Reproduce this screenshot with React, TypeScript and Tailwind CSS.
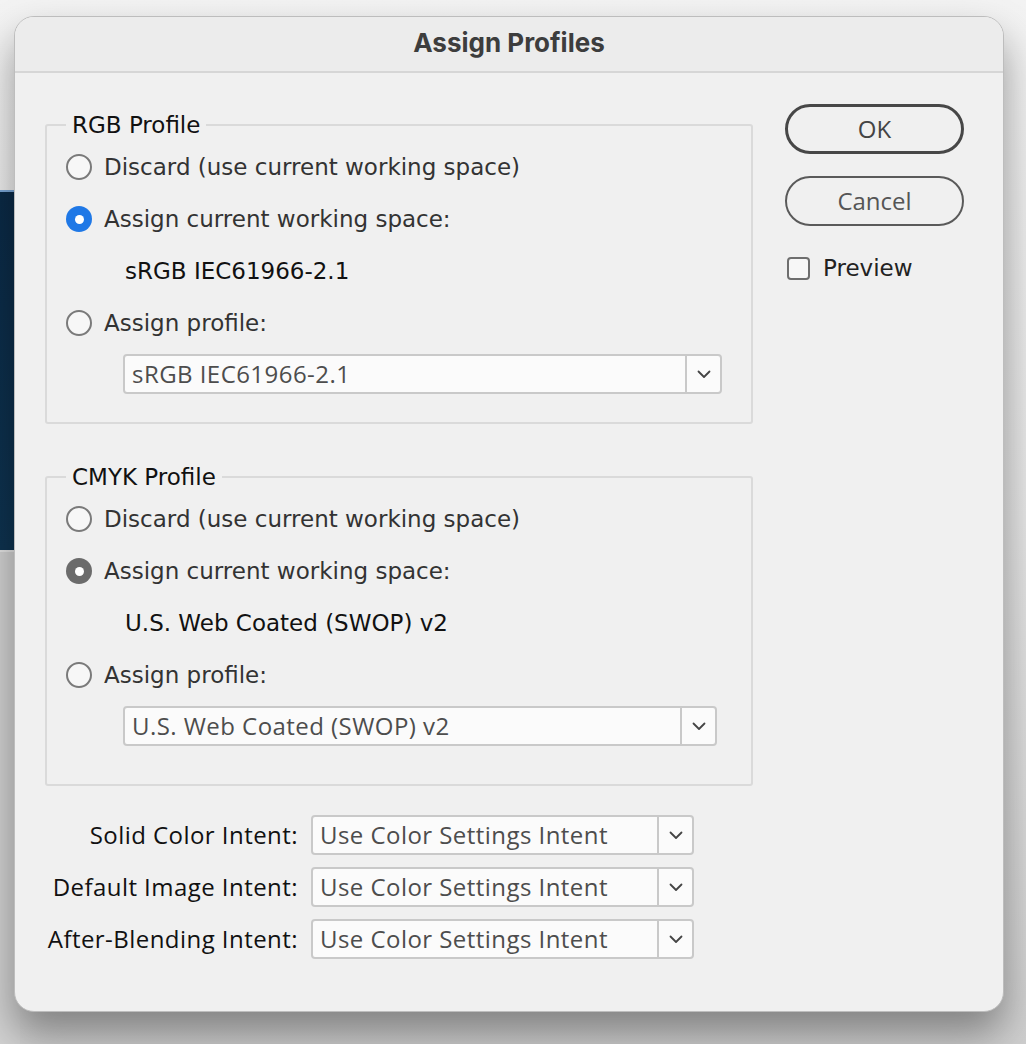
const lucida = "font-['DejaVu_Sans',sans-serif]";
const myriad = "font-['Open_Sans',sans-serif]";

function Radio({ checked, tone }: { checked?: boolean; tone?: "blue" | "gray" }) {
  if (!checked) {
    return <span className="block w-[26px] h-[26px] shrink-0 rounded-full border-2 border-[#7a7a7a] bg-[#f7f7f7]" />;
  }
  return (
    <span
      className={
        "flex w-[26px] h-[26px] shrink-0 items-center justify-center rounded-full " +
        (tone === "blue" ? "bg-[#1f78e6]" : "bg-[#6b6b6b]")
      }
    >
      <span className="block w-[9px] h-[9px] rounded-full bg-white" />
    </span>
  );
}

function Chevron() {
  return (
    <svg width="14" height="9" viewBox="0 0 14 9" fill="none">
      <path d="M1.5 1.5 L7 7 L12.5 1.5" stroke="#444" strokeWidth="1.8" strokeLinecap="round" strokeLinejoin="round" />
    </svg>
  );
}

function Select({ value, width }: { value: string; width: string }) {
  return (
    <div className={`flex h-[40px] ${width} items-stretch rounded-[4px] border-2 border-[#c9c9c9] bg-[#fbfbfb]`}>
      <div className={`flex flex-1 items-center pl-[7px] text-[24px] tracking-[0.45px] text-[#4d4d4d] ${myriad}`}>{value}</div>
      <div className="flex w-[35px] items-center justify-center border-l-2 border-[#c9c9c9]">
        <Chevron />
      </div>
    </div>
  );
}

function RadioRow({ label, checked, tone }: { label: string; checked?: boolean; tone?: "blue" | "gray" }) {
  return (
    <div className="flex h-[52px] items-center gap-[12px]">
      <Radio checked={checked} tone={tone} />
      <span className={`text-[23px] text-[#333] ${lucida}`}>{label}</span>
    </div>
  );
}

function ProfileGroup({
  title,
  current,
  tone,
  selectWidth,
  bottom,
}: {
  title: string;
  current: string;
  tone: "blue" | "gray";
  selectWidth: string;
  bottom: string;
}) {
  return (
    <fieldset className={`w-[708px] rounded-[3px] border-2 border-[#dadada] pl-[19px] pt-[2px] ${bottom}`}>
      <legend className={`px-[6px] text-[23px] leading-[28px] text-[#111] ${lucida}`}>{title}</legend>
      <RadioRow label="Discard (use current working space)" />
      <RadioRow label="Assign current working space:" checked tone={tone} />
      <div className={`flex h-[52px] items-center pl-[59px] text-[23px] text-[#111] ${lucida}`}>{current}</div>
      <RadioRow label="Assign profile:" />
      <div className="mt-[5px] pl-[57px]">
        <Select value={current} width={selectWidth} />
      </div>
    </fieldset>
  );
}

function IntentRow({ label }: { label: string }) {
  return (
    <div className="flex items-center">
      <div className={`w-[266px] pr-[13px] text-right text-[24px] tracking-[0.45px] text-[#111] whitespace-nowrap ${myriad}`}>
        {label}
      </div>
      <Select value="Use Color Settings Intent" width="w-[383px]" />
    </div>
  );
}

export default function App() {
  return (
    <div className="relative h-[1044px] w-[1026px] overflow-hidden bg-gradient-to-b from-[#f3f3f3] via-[#e6e6e6] to-[#cfcfcf]">
      {/* desktop window peeking out on the left */}
      <div className="absolute left-0 top-[190px] h-[360px] w-[20px] border-t-2 border-[#7aa6d6] bg-gradient-to-b from-[#0b2a46] to-[#0e3350]" />
      <div className="absolute left-0 top-[552px] h-[500px] w-[20px] bg-[#d2d2d2]" />

      <div className="relative ml-[14px] mt-[16px] h-[996px] w-[990px] overflow-hidden rounded-[20px] border border-[#bdbdbd] bg-[#f0f0f0] shadow-[0_22px_40px_rgba(0,0,0,0.38)]">
        <div className="flex h-[56px] items-center justify-center border-b-2 border-[#d6d6d6] bg-[#ececec] pb-[3px]">
          <span className="font-['Inter',sans-serif] text-[26px] font-bold text-[#3d3d3d]">Assign Profiles</span>
        </div>

        <div className="flex pl-[30px]">
          <div className="flex flex-col pt-[38px]">
            <ProfileGroup
              title="RGB Profile"
              current="sRGB IEC61966-2.1"
              tone="blue"
              selectWidth="w-[599px]"
              bottom="pb-[28px]"
            />
            <div className="h-[39px]" />
            <ProfileGroup
              title="CMYK Profile"
              current="U.S. Web Coated (SWOP) v2"
              tone="gray"
              selectWidth="w-[594px]"
              bottom="pb-[38px]"
            />
            <div className="mt-[29px] flex flex-col gap-[12px]">
              <IntentRow label="Solid Color Intent:" />
              <IntentRow label="Default Image Intent:" />
              <IntentRow label="After-Blending Intent:" />
            </div>
          </div>

          <div className="ml-[32px] flex flex-col pt-[31px]">
            <button className={`h-[50px] w-[179px] rounded-full border-[3px] border-[#474747] text-[24px] text-[#444] ${myriad}`}>
              OK
            </button>
            <button className={`mt-[22px] h-[50px] w-[179px] rounded-full border-2 border-[#5a5a5a] text-[24px] text-[#555] ${myriad}`}>
              Cancel
            </button>
            <label className="mt-[25px] flex items-center gap-[13px] pl-[2px]">
              <span className="block h-[23px] w-[23px] rounded-[4px] border-2 border-[#6e6e6e] bg-[#f7f7f7]" />
              <span className={`text-[23px] text-[#222] ${lucida}`}>Preview</span>
            </label>
          </div>
        </div>
      </div>
    </div>
  );
}
